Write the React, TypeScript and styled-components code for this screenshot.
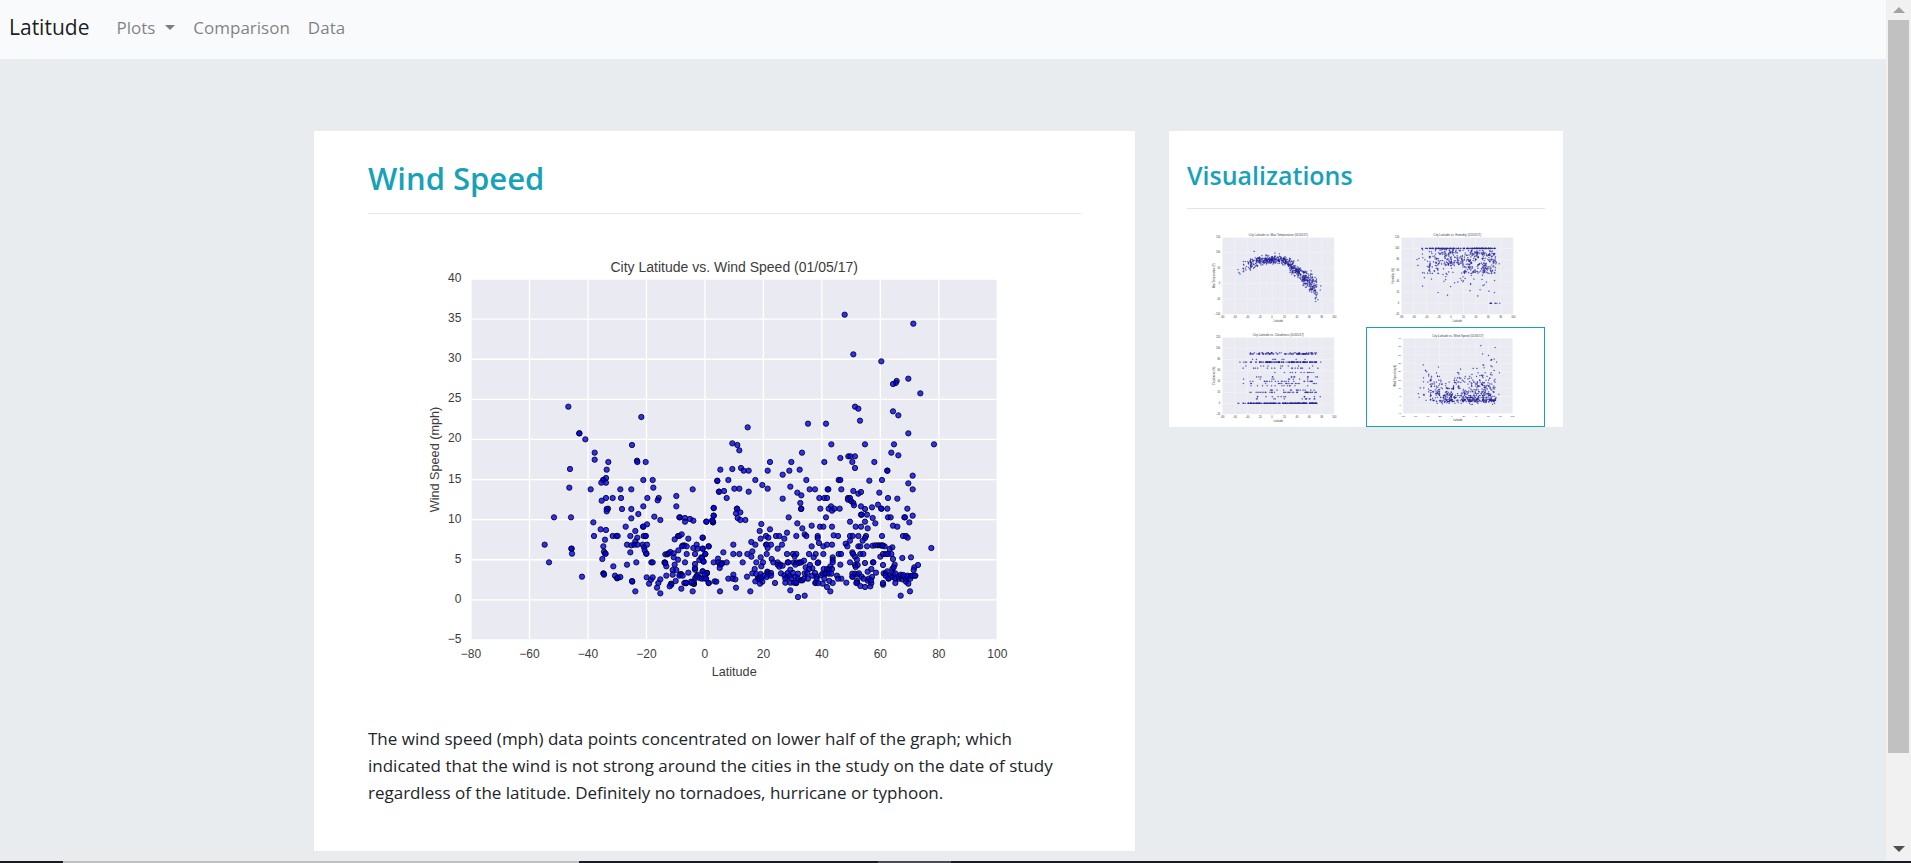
import React from "react";
import styled, { createGlobalStyle } from "styled-components";

const TEAL = "#17a2b8";
const UI_FONT = '"Open Sans", "Noto Sans", sans-serif';

const GlobalStyle = createGlobalStyle`
  *, *::before, *::after { box-sizing: border-box; }
  body {
    margin: 0;
    background: #e8ecef;
    color: #212529;
    font-family: ${UI_FONT};
    font-size: 17px;
    line-height: 27px;
  }
`;

/* ---------- page frame ---------- */

const Screen = styled.div`
  display: flex;
  flex-direction: column;
  height: 100vh;
`;

const Viewport = styled.div`
  display: flex;
  flex: 1;
  min-height: 0;
`;

const Page = styled.div`
  flex: 1;
  min-width: 0;
  overflow: hidden;
`;

const ScrollTrack = styled.div`
  display: flex;
  flex-direction: column;
  align-items: center;
  width: 25px;
  background: #f1f1f1;
`;

const ScrollArrow = styled.div<{ $down?: boolean }>`
  display: flex;
  align-items: center;
  justify-content: center;
  height: ${(p) => (p.$down ? 24 : 20)}px;
  &::before {
    content: "";
    border: 6px solid transparent;
    ${(p) =>
      p.$down
        ? "border-top-color: #505050; border-bottom-width: 0;"
        : "border-bottom-color: #a3a3a3; border-top-width: 0;"}
  }
`;

const ScrollThumb = styled.div`
  flex: 733;
  width: 21px;
  background: #c1c1c1;
`;

const ScrollRest = styled.div`
  flex: 84;
`;

const Taskbar = styled.div`
  display: flex;
  height: 2px;
  background: #1b1a22;
`;

const TaskSegment = styled.div<{ $grow: number; $color?: string }>`
  flex: ${(p) => p.$grow};
  background: ${(p) => p.$color || "transparent"};
`;

/* ---------- navigation ---------- */

const Navbar = styled.nav`
  display: flex;
  align-items: center;
  height: 59px;
  padding: 0 9px 4px;
  background: #f8fafc;
`;

const Brand = styled.a`
  margin-right: 27px;
  color: rgba(0, 0, 0, 0.9);
  font-size: 21px;
  text-decoration: none;
`;

const NavItems = styled.div`
  display: flex;
  align-items: center;
  gap: 18px;
`;

const NavLink = styled.a`
  color: rgba(0, 0, 0, 0.5);
  text-decoration: none;
`;

const NavDropdown = styled.button`
  display: flex;
  align-items: center;
  gap: 10px;
  padding: 0;
  border: 0;
  background: none;
  color: rgba(0, 0, 0, 0.5);
  font: inherit;
  &::after {
    content: "";
    border: 5px solid transparent;
    border-top-color: currentColor;
    border-bottom-width: 0;
  }
`;

/* ---------- content ---------- */

const Content = styled.main`
  display: grid;
  grid-template-columns: 314fr 821fr 34fr 394fr 323fr;
  align-items: start;
  padding-top: 72px;
`;

const Article = styled.article`
  grid-column: 2;
  padding: 27px 54px 45px;
  background: #fff;
`;

const Sidebar = styled.aside`
  grid-column: 4;
  padding: 27px 18px 0;
  background: #fff;
`;

const Title = styled.h1`
  margin: 0;
  color: ${TEAL};
  font-size: 31px;
  font-weight: 600;
  line-height: 40px;
`;

const Subtitle = styled.h2`
  margin: 0;
  color: ${TEAL};
  font-size: 25px;
  font-weight: 600;
  line-height: 35px;
`;

const Rule = styled.hr<{ $after: number }>`
  margin: 15px 0 ${(p) => p.$after}px;
  border: 0;
  border-top: 1px solid #e4e5e6;
`;

const Figure = styled.figure`
  display: flex;
  justify-content: center;
  margin: 0 0 25px;
`;

const MainPlot = styled.svg`
  display: block;
  width: 100%;
  max-width: 679px;
`;

const Description = styled.p`
  margin: 0;
`;

const ThumbGrid = styled.div`
  display: grid;
  grid-template-columns: 1fr 1fr;
`;

const ThumbLink = styled.a<{ $active?: boolean }>`
  display: flex;
  justify-content: center;
  height: 100px;
  border: ${(p) => (p.$active ? `1px solid ${TEAL}` : "0")};
`;

const ThumbPlot = styled.svg`
  display: block;
  height: 100%;
`;

/* ---------- charts ---------- */

type Point = [number, number];

const FIG = { w: 2037, h: 1410, left: 258, top: 147, width: 1579, height: 1083 };

const xOf = (lat: number) => FIG.left + ((lat + 80) / 180) * FIG.width;
const latOf = (x: number) => ((x - FIG.left) / FIG.width) * 180 - 80;

const parse = (text: string, dx: number, dy: number): Point[] =>
  text
    .trim()
    .split(/\s+/)
    .map((pair) => {
      const [x, y] = pair.split(",").map(Number);
      return [x + dx, y + dy] as Point;
    });

/* Wind readings, southern half: strong winds first, then the rest. */
const SOUTH_HIGH = `444,471 663,502 477,551 477,551 495,569 635,586 523,609 523,630 564,637 650,633 651,637 676,637`;
const SOUTH_LOW = `449,28 447,84 511,89 544,123 557,115 577,115 602,115 600,89 633,89 559,30 557,55 549,61 549,61 543,69 557,69
669,61 697,61 699,84 681,115 715,115 712,122 669,140 768,109 768,140 817,89 891,64 896,96 563,147 559,148 559,155
605,148 633,148 654,163 633,176 702,171 720,181 616,201 645,214 680,194 668,201 669,201 401,173 452,173 519,188 541,209 557,211
521,229 554,240 577,229 588,229 592,229 630,229 651,234 645,245 670,229 676,229 676,229 620,255 633,257 642,255 651,255 667,255
680,255 671,263 673,272 549,260 551,276 554,282 556,282 546,298 630,278 678,282 678,282 373,255 386,308 454,267 453,267 455,282
485,351 579,320 620,315 648,308 693,308 697,308 549,341 550,342 551,345 584,348 590,356 593,354 600,352 636,366 635,364 645,395
679,353 686,372 692,360 697,353 710,384 720,401 714,370 720,359 738,320 738,348 733,308 733,309 735,310 735,284 741,284 745,281
750,277 760,281 760,293 763,315 757,331 768,331 757,345 766,364 752,372 753,375 748,380 774,272 763,239 773,229 777,229
784,224 804,237 847,234 792,257 787,258 799,260 785,260 779,173 777,173 794,175 794,186 809,178 819,183 858,186 876,183
878,188 880,168 880,145 799,283 773,300 794,308 804,339 782,343 780,345 777,348 787,348 792,370 797,371 797,369 783,387
817,395 821,373 820,371 820,365 814,370 812,366 825,355 832,345 829,349 824,330 824,325 824,313 824,283 819,265 829,255
832,267 847,267 865,260 855,283 837,301 845,295 843,293 849,305 847,335 860,340 838,355 850,355 857,357 865,370`;

/* Wind readings, northern half. */
const NORTH_HIGH = `433,195 639,222 459,314 543,335 624,387 589,394 586,400 578,403 660,431 464,471 474,477 578,485 594,497 479,513
323,522 377,522 142,533 624,551 96,581 111,586 117,602 393,584 494,584 581,584 701,584 305,609 573,609 594,617 420,625
444,620 450,620 464,620 209,637 273,637 372,637 456,637 522,637`;
const NORTH_LOW = `60,30 96,28 122,25 130,33 145,33 202,33 247,45 267,33 298,30 464,25 561,33 561,33 637,48 624,71 637,89 51,63 84,61
165,61 186,76 202,87 102,87 117,87 145,96 56,96 71,94 79,115 247,117 270,81 291,99 303,107 318,61 328,89 344,89 382,89 384,89
415,61 420,61 423,89 357,115 372,115 380,115 300,130 303,147 302,148 360,147 392,140 385,147 395,153 402,147 418,147 377,173
443,115 449,115 443,120 452,124 459,94 474,102 482,97 459,130 461,137 482,140 494,148 482,165 484,165 500,165 515,143 533,135
543,147 543,147 561,147 507,63 545,61 537,99 563,115 591,117 621,147 637,168 612,173 614,173 627,188 563,173 571,173 517,175
525,191 494,186 449,186 502,206 466,201 482,201 578,198 591,201 40,145 40,168 18,186 38,188 36,182 110,147 110,147 107,161
120,158 112,175 120,181 135,181 265,173 291,191 306,206 334,198 359,201 369,201 395,201 183,193 178,214 209,209 260,219
252,237 288,229 313,224 318,229 197,229 204,234 181,237 227,229 237,229 352,229 352,235 356,250 400,227 413,229 449,229
457,229 474,229 497,229 494,235 449,243 487,243 545,229 608,229 617,229 622,234 693,265 7,234 25,260 7,267 69,278 99,255
99,283 117,283 153,247 165,255 156,275 141,283 153,291 197,255 199,255 212,255 202,265 199,283 245,255 232,267 334,260
369,260 380,255 395,255 436,252 441,260 474,260 480,260 500,260 517,258 525,257 533,257 540,257 545,258 553,260 576,263
568,268 547,257 260,283 278,283 288,283 283,290 326,283 346,283 340,293 369,283 397,293 397,301 415,283 422,283 456,278
458,283 480,283 489,283 464,291 470,300 540,291 548,283 556,283 563,283 573,283 578,298 606,295 632,293 653,316 642,323
583,315 548,316 15,283 5,295 10,306 53,297 40,308 54,308 66,310 79,308 59,315 64,313 58,325 127,308 181,293 188,308 168,308
183,320 214,298 219,308 232,308 232,315 240,315 247,318 237,321 262,308 264,308 280,308 288,308 298,308 285,315 295,310
303,308 311,303 316,323 329,316 336,326 326,328 354,308 352,310 397,308 390,320 370,328 380,328 387,330 395,328 420,315
449,308 464,316 472,316 466,322 494,310 518,308 519,308 513,328 502,336 527,339 576,328 580,323 7,335 20,340 13,345
5,357 17,357 25,370 43,365 48,366 84,357 99,345 97,357 105,359 107,384 150,395 59,395 140,351 156,341 163,328 168,343
173,357 174,357 178,351 181,343 183,356 186,366 179,372 165,365 191,348 201,336 202,338 204,345 199,352 212,340 212,348
224,370 242,341 252,347 260,352 255,357 262,340 270,330 268,348 278,340 273,356 285,351 293,342 293,357 270,369 281,369
288,370 287,369 255,369 301,362 306,362 311,357 313,341 323,357 321,340 336,348 344,340 349,351 349,357 346,369 345,370
354,370 362,347 367,342 375,342 377,341 385,342 393,342 372,357 380,382 367,372 387,364 397,370 410,348 423,357 413,357
390,395 438,369 456,342 456,351 457,351 464,342 472,345 476,341 470,364 470,369 468,370 484,351 489,357 480,379 494,382
510,380 513,370 502,363 505,357 515,352 512,362 548,375 548,370 550,341 556,341 561,335 556,348 565,357 564,356 573,348
578,352 585,357 585,370 578,341 585,341 596,357 596,350 606,359 601,345 611,351 609,346 617,366 617,357 624,351 622,348
632,349 630,357 637,348 645,348 644,348 640,331 624,372 629,395 601,408 270,392 293,412 313,408`;

const WIND: Point[] = [
  ...parse(SOUTH_HIGH, 106, 59),
  ...parse(SOUTH_LOW, 106, 689),
  ...parse(NORTH_HIGH, 946, 59),
  ...parse(NORTH_LOW, 946, 689),
];

/* Repeatable pseudo-random sequence, so that each render draws the same cities. */
const sequence = (seed: number) => {
  let s = seed;
  return () => {
    s = (s * 16807) % 2147483647;
    return s / 2147483647;
  };
};

const LATITUDES = WIND.map(([x]) => latOf(x));

const project = (min: number, max: number, valueAt: (lat: number, i: number) => number): Point[] =>
  LATITUDES.map((lat, i) => [
    xOf(lat),
    FIG.top + ((max - valueAt(lat, i)) / (max - min)) * FIG.height,
  ]);

const TEMP_CURVE: Point[] = [
  [-56, 40], [-38, 62], [-20, 75], [18, 78], [29, 60], [39, 40], [50, 22], [61, 4], [66, -10], [74, -20], [80, 11],
];

const temperature = (() => {
  const rnd = sequence(4711);
  return project(-100, 150, (lat) => {
    const i = Math.max(1, TEMP_CURVE.findIndex(([l]) => l >= lat));
    const [l0, t0] = TEMP_CURVE[i - 1];
    const [l1, t1] = TEMP_CURVE[i];
    const base = t0 + ((t1 - t0) * (lat - l0)) / (l1 - l0);
    const spread = lat > 62 ? 115 : lat > 45 ? 85 : lat > 28 ? 58 : lat < -15 ? 52 : 36;
    const noise = (rnd() + rnd() + rnd()) / 3 - 0.5;
    return base + noise * spread + (rnd() < 0.03 ? -24 + rnd() * 54 : 0);
  });
})();

const humidity = (() => {
  const rnd = sequence(991);
  return project(-20, 120, (lat) => {
    if (lat > 62 && rnd() < 0.16) return 0;
    const r = rnd();
    if (r < 0.24) return 100;
    if (r < 0.8) return 98 - rnd() * (lat > -20 && lat < 20 ? 30 : 44);
    return 92 - rnd() * Math.sqrt(rnd()) * 84;
  });
})();

const CLOUD_LEVELS: Point[] = [
  [0, 0.32], [75, 0.16], [90, 0.15], [92, 0.04], [20, 0.06], [40, 0.05], [8, 0.03], [12, 0.02], [24, 0.02], [32, 0.02],
  [36, 0.03], [44, 0.02], [48, 0.02], [56, 0.02], [64, 0.02], [68, 0.01], [80, 0.02], [5, 0.01], [100, 0.01],
];

const cloudiness = (() => {
  const rnd = sequence(2024);
  return project(-20, 120, () => {
    let r = rnd();
    for (const [level, share] of CLOUD_LEVELS) {
      r -= share;
      if (r < 0) return level;
    }
    return 0;
  });
})();

interface ChartProps {
  title: string;
  yLabel: string;
  ticks: number[];
  points: Point[];
  small?: boolean;
}

const X_TICKS = [-80, -60, -40, -20, 0, 20, 40, 60, 80, 100];
const label = (n: number) => String(n).replace("-", "\u2212");

const Chart = ({ title, yLabel, ticks, points, small }: ChartProps) => {
  const min = ticks[0];
  const max = ticks[ticks.length - 1];
  const yOf = (v: number) => FIG.top + ((max - v) / (max - min)) * FIG.height;
  const midX = FIG.left + FIG.width / 2;
  const midY = FIG.top + FIG.height / 2;
  return (
    <g fontFamily='"Liberation Sans", Arial, sans-serif' fill="#3c3c3c">
      <rect x={FIG.left} y={FIG.top} width={FIG.width} height={FIG.height} fill="#eaeaf2" />
      <g stroke="#fff" strokeWidth="4">
        {X_TICKS.map((t) => (
          <line key={t} x1={xOf(t)} x2={xOf(t)} y1={FIG.top} y2={FIG.top + FIG.height} />
        ))}
        {ticks.map((t) => (
          <line key={t} x1={FIG.left} x2={FIG.left + FIG.width} y1={yOf(t)} y2={yOf(t)} />
        ))}
      </g>
      <g
        fill="#0000ff"
        fillOpacity="0.8"
        stroke="#000"
        strokeOpacity="0.8"
        strokeWidth="3"
        opacity={small ? 0.85 : 1}
      >
        {points.map(([x, y], i) => (
          <circle key={i} cx={x} cy={y} r="8" />
        ))}
      </g>
      <g fontSize="36">
        {X_TICKS.map((t) => (
          <text key={t} x={xOf(t)} y="1283" textAnchor="middle">{label(t)}</text>
        ))}
        {ticks.map((t) => (
          <text key={t} x="229" y={yOf(t) + 9} textAnchor="end">{label(t)}</text>
        ))}
      </g>
      <text x={midX} y="127" textAnchor="middle" fontSize="42">{title}</text>
      <text x={midX} y="1337" textAnchor="middle" fontSize="38">Latitude</text>
      <text transform={`translate(162 ${midY}) rotate(-90)`} textAnchor="middle" fontSize="38">{yLabel}</text>
    </g>
  );
};

const CHARTS: Record<string, ChartProps> = {
  temperature: {
    title: "City Latitude vs. Max Temperature (01/05/17)",
    yLabel: "Max Temperature (F)",
    ticks: [-100, -50, 0, 50, 100, 150],
    points: temperature,
  },
  humidity: {
    title: "City Latitude vs. Humidity (01/05/17)",
    yLabel: "Humidity (%)",
    ticks: [-20, 0, 20, 40, 60, 80, 100, 120],
    points: humidity,
  },
  cloudiness: {
    title: "City Latitude vs. Cloudiness (01/05/17)",
    yLabel: "Cloudiness (%)",
    ticks: [-20, 0, 20, 40, 60, 80, 100, 120],
    points: cloudiness,
  },
  wind: {
    title: "City Latitude vs. Wind Speed (01/05/17)",
    yLabel: "Wind Speed (mph)",
    ticks: [-5, 0, 5, 10, 15, 20, 25, 30, 35, 40],
    points: WIND,
  },
};

const VIEW_BOX = `0 0 ${FIG.w} ${FIG.h}`;

export default function App() {
  return (
    <>
      <GlobalStyle />
      <Screen>
        <Viewport>
          <Page>
            <Navbar>
              <Brand href="#home">Latitude</Brand>
              <NavItems>
                <NavDropdown type="button" aria-haspopup="true">Plots</NavDropdown>
                <NavLink href="#comparison">Comparison</NavLink>
                <NavLink href="#data">Data</NavLink>
              </NavItems>
            </Navbar>
            <Content>
              <Article>
                <Title>Wind Speed</Title>
                <Rule $after={16} />
                <Figure>
                  <MainPlot viewBox={VIEW_BOX} role="img" aria-label={CHARTS.wind.title}>
                    <Chart {...CHARTS.wind} />
                  </MainPlot>
                </Figure>
                <Description>
                  The wind speed (mph) data points concentrated on lower half of the graph; which
                  indicated that the wind is not strong around the cities in the study on the date of
                  study regardless of the latitude. Definitely no tornadoes, hurricane or typhoon.
                </Description>
              </Article>
              <Sidebar>
                <Subtitle>Visualizations</Subtitle>
                <Rule $after={18} />
                <ThumbGrid>
                  {Object.entries(CHARTS).map(([name, chart]) => (
                    <ThumbLink key={name} href={`#${name}`} $active={name === "wind"} aria-label={chart.title}>
                      <ThumbPlot viewBox={VIEW_BOX} aria-hidden="true">
                        <Chart {...chart} small />
                      </ThumbPlot>
                    </ThumbLink>
                  ))}
                </ThumbGrid>
              </Sidebar>
            </Content>
          </Page>
          <ScrollTrack aria-hidden="true">
            <ScrollArrow />
            <ScrollThumb />
            <ScrollRest />
            <ScrollArrow $down />
          </ScrollTrack>
        </Viewport>
        <Taskbar aria-hidden="true">
          <TaskSegment $grow={63} />
          <TaskSegment $grow={516} $color="#c1c1c1" />
          <TaskSegment $grow={299} />
          <TaskSegment $grow={73} $color="#4c4b54" />
          <TaskSegment $grow={960} />
        </Taskbar>
      </Screen>
    </>
  );
}
